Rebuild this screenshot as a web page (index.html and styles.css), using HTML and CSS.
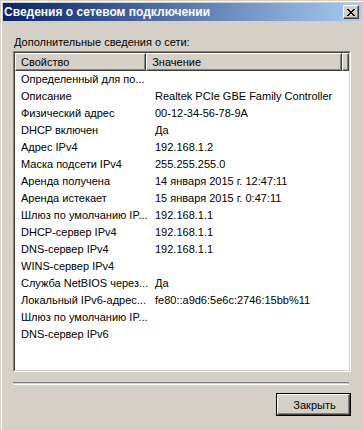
FILE: index.html
```html
<!DOCTYPE html>
<html lang="ru">
<head>
<meta charset="utf-8">
<title>Сведения о сетевом подключении</title>
<link rel="stylesheet" href="styles.css">
</head>
<body>
<div class="window">
  <div class="titlebar">
    <span class="title">Сведения о сетевом подключении</span>
    <div class="close" aria-label="Закрыть">
      <svg width="8" height="7" viewBox="0 0 8 7"><path d="M0 0h2v1h1v1h2v-1h1v-1h2v1h-1v1h-1v1h-1v1h1v1h1v1h1v1h-2v-1h-1v-1h-2v1h-1v1h-2v-1h1v-1h1v-1h1v-1h-1v-1h-1v-1h-1z" fill="#000"/></svg>
    </div>
  </div>
  <div class="content">
    <div class="label">Дополнительные сведения о сети:</div>
    <div class="list">
      <div class="list-inner">
        <div class="header">
          <div class="hcell hcell-key">Свойство</div>
          <div class="hcell hcell-val">Значение</div>
          <div class="hcell hcell-rest"></div>
        </div>
        <div class="rows">
          <div class="row"><span class="key">Определенный для по...</span><span class="val"></span></div>
          <div class="row"><span class="key">Описание</span><span class="val">Realtek PCIe GBE Family Controller</span></div>
          <div class="row"><span class="key">Физический адрес</span><span class="val">00-12-34-56-78-9A</span></div>
          <div class="row"><span class="key">DHCP включен</span><span class="val">Да</span></div>
          <div class="row"><span class="key">Адрес IPv4</span><span class="val">192.168.1.2</span></div>
          <div class="row"><span class="key">Маска подсети IPv4</span><span class="val">255.255.255.0</span></div>
          <div class="row"><span class="key">Аренда получена</span><span class="val">14 января 2015 г. 12:47:11</span></div>
          <div class="row"><span class="key">Аренда истекает</span><span class="val">15 января 2015 г. 0:47:11</span></div>
          <div class="row"><span class="key">Шлюз по умолчанию IP...</span><span class="val">192.168.1.1</span></div>
          <div class="row"><span class="key">DHCP-сервер IPv4</span><span class="val">192.168.1.1</span></div>
          <div class="row"><span class="key">DNS-сервер IPv4</span><span class="val">192.168.1.1</span></div>
          <div class="row"><span class="key">WINS-сервер IPv4</span><span class="val"></span></div>
          <div class="row"><span class="key">Служба NetBIOS через...</span><span class="val">Да</span></div>
          <div class="row"><span class="key">Локальный IPv6-адрес...</span><span class="val">fe80::a9d6:5e6c:2746:15bb%11</span></div>
          <div class="row"><span class="key">Шлюз по умолчанию IP...</span><span class="val"></span></div>
          <div class="row"><span class="key">DNS-сервер IPv6</span><span class="val"></span></div>
        </div>
      </div>
    </div>
    <div class="separator"></div>
    <div class="actions">
      <div class="btn"><div class="btn-face">Закрыть</div></div>
    </div>
  </div>
</div>
</body>
</html>
```
FILE: styles.css
```css
html, body {
  margin: 0;
  padding: 0;
  background: #d4d0c8;
  overflow: hidden;
}
body {
  font-family: "Liberation Sans", Arial, sans-serif;
  font-size: 11px;
  color: #000;
}
.window {
  width: 363px;
  height: 430px;
  box-sizing: border-box;
  background: #d4d0c8;
  border-top: 1px solid #d4d0c8;
  border-left: 1px solid #d4d0c8;
  display: flex;
  flex-direction: column;
}
.window::before {
  content: none;
}
.window {
  box-shadow: inset 1px 1px 0 #ffffff;
  padding: 2px 2px 0 2px;
}
.titlebar {
  height: 18px;
  background: linear-gradient(to right, #0a246a, #a6caf0);
  display: flex;
  align-items: center;
  justify-content: space-between;
  padding: 0 2px 0 1px;
}
.title {
  color: #fff;
  font-weight: bold;
  font-size: 12px;
  white-space: nowrap;
}
.close {
  width: 16px;
  height: 14px;
  box-sizing: border-box;
  background: #d4d0c8;
  border-top: 1px solid #fff;
  border-left: 1px solid #fff;
  border-right: 1px solid #404040;
  border-bottom: 1px solid #404040;
  box-shadow: inset -1px -1px 0 #808080;
  display: flex;
  align-items: center;
  justify-content: center;
  padding-right: 1px;
}
.content {
  flex: 1;
  display: flex;
  flex-direction: column;
  padding: 15px 10px 0 10px;
}
.label {
  height: 13px;
  line-height: 13px;
  padding-left: 1px;
  margin-bottom: 2px;
}
.list {
  height: 321px;
  box-sizing: border-box;
  border: 1px solid;
  border-color: #808080 #ffffff #ffffff #808080;
}
.list-inner {
  height: 100%;
  box-sizing: border-box;
  border: 1px solid;
  border-color: #404040 #d4d0c8 #d4d0c8 #404040;
  background: #fff;
  overflow: hidden;
}
.header {
  display: flex;
  height: 18px;
}
.hcell {
  box-sizing: border-box;
  background: #d4d0c8;
  border-top: 1px solid #fff;
  border-left: 1px solid #fff;
  border-right: 1px solid #404040;
  border-bottom: 1px solid #404040;
  box-shadow: inset -1px -1px 0 #808080;
  line-height: 16px;
  padding-left: 5px;
  white-space: nowrap;
}
.hcell-key {
  width: 134px;
}
.hcell-val {
  width: 200px;
}
.hcell-rest {
  flex: 1;
}
.rows {
  display: flex;
  flex-direction: column;
}
.row {
  display: flex;
  height: 17px;
  line-height: 17px;
  white-space: nowrap;
}
.key {
  width: 134px;
  box-sizing: border-box;
  padding-left: 6px;
  overflow: hidden;
}
.val {
  padding-left: 6px;
}
.separator {
  margin-top: 10px;
  margin-right: 2px;
  height: 1px;
  border-top: 1px solid #808080;
  border-bottom: 1px solid #ffffff;
}
.actions {
  display: flex;
  justify-content: flex-end;
  margin-top: 8px;
}
.btn {
  width: 75px;
  height: 23px;
  box-sizing: border-box;
  border: 1px solid #000;
}
.btn-face {
  height: 100%;
  box-sizing: border-box;
  border-top: 1px solid #fff;
  border-left: 1px solid #fff;
  border-right: 1px solid #404040;
  border-bottom: 1px solid #404040;
  box-shadow: inset -1px -1px 0 #808080;
  display: flex;
  align-items: center;
  justify-content: center;
  padding-left: 2px;
}
```
